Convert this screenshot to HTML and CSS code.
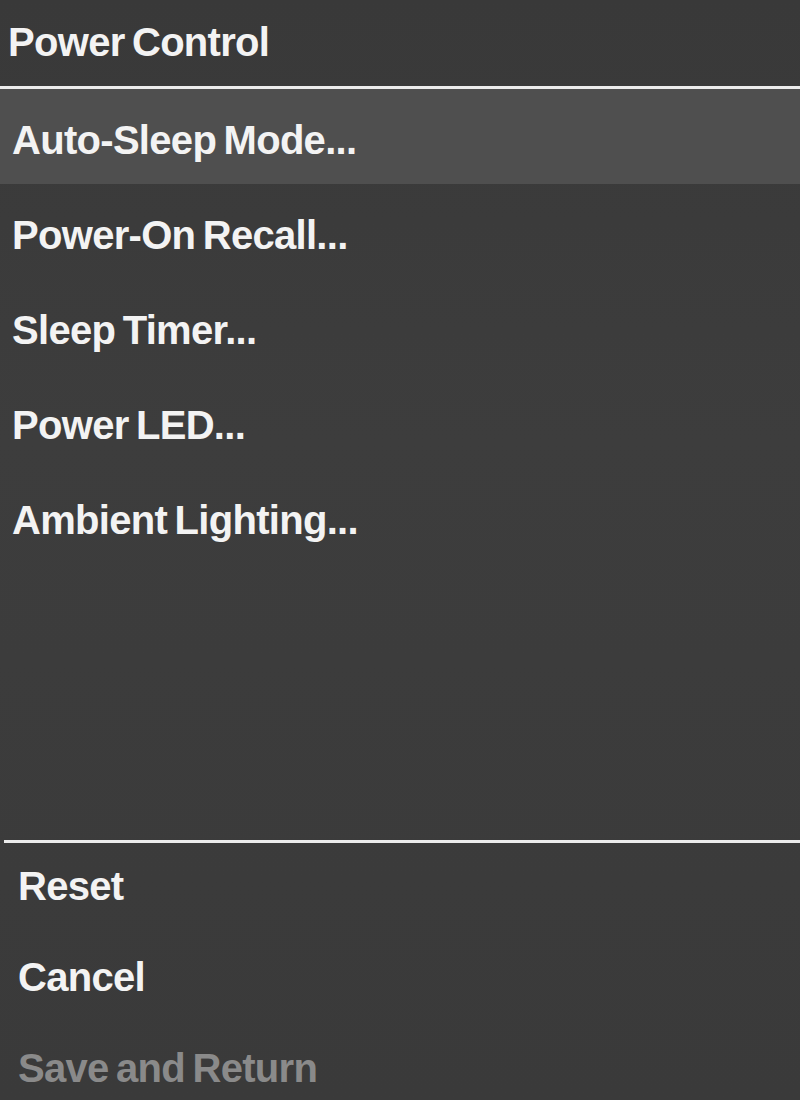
FILE: index.html
```html
<!DOCTYPE html>
<html>
<head>
<meta charset="utf-8">
<link rel="stylesheet" href="styles.css">
</head>
<body>
<div class="osd">
  <div class="title">Power Control</div>
  <div class="rule"></div>
  <ul class="menu">
    <li class="item selected">Auto-Sleep Mode...</li>
    <li class="item">Power-On Recall...</li>
    <li class="item">Sleep Timer...</li>
    <li class="item">Power LED...</li>
    <li class="item">Ambient Lighting...</li>
  </ul>
  <div class="rule lower"></div>
  <ul class="actions">
    <li class="action">Reset</li>
    <li class="action">Cancel</li>
    <li class="action disabled">Save and Return</li>
  </ul>
</div>
</body>
</html>
```

FILE: styles.css
```css
html, body {
  margin: 0;
  padding: 0;
  background: #3b3b3b;
}

.osd {
  width: 800px;
  height: 1100px;
  overflow: hidden;
  display: flex;
  flex-direction: column;
  background: linear-gradient(180deg, #393939 0%, #3d3d3d 40%, #3a3a3a 100%);
  font-family: "Liberation Sans", Arial, sans-serif;
  font-weight: bold;
  font-size: 40px;
  letter-spacing: -0.7px;
  word-spacing: -3px;
  color: #f3f3f3;
}

.title {
  height: 86px;
  display: flex;
  align-items: center;
  padding-left: 8px;
  padding-bottom: 2px;
  box-sizing: border-box;
}

.rule {
  height: 3px;
  background: #ececec;
  flex: none;
}

.rule.lower {
  margin-left: 4px;
}

.menu, .actions {
  list-style: none;
  margin: 0;
  padding: 0;
}

.menu {
  flex: 1;
}

.item {
  height: 95px;
  box-sizing: border-box;
  display: flex;
  align-items: center;
  padding-left: 12px;
  padding-top: 8px;
}

.item.selected {
  background: #4f4f4f;
}

.action {
  height: 91px;
  box-sizing: border-box;
  display: flex;
  align-items: center;
  padding-left: 18px;
  padding-bottom: 5px;
}

.action.disabled {
  color: #8a8a8a;
}

.actions {
  height: 257px;
  flex: none;
}
```
